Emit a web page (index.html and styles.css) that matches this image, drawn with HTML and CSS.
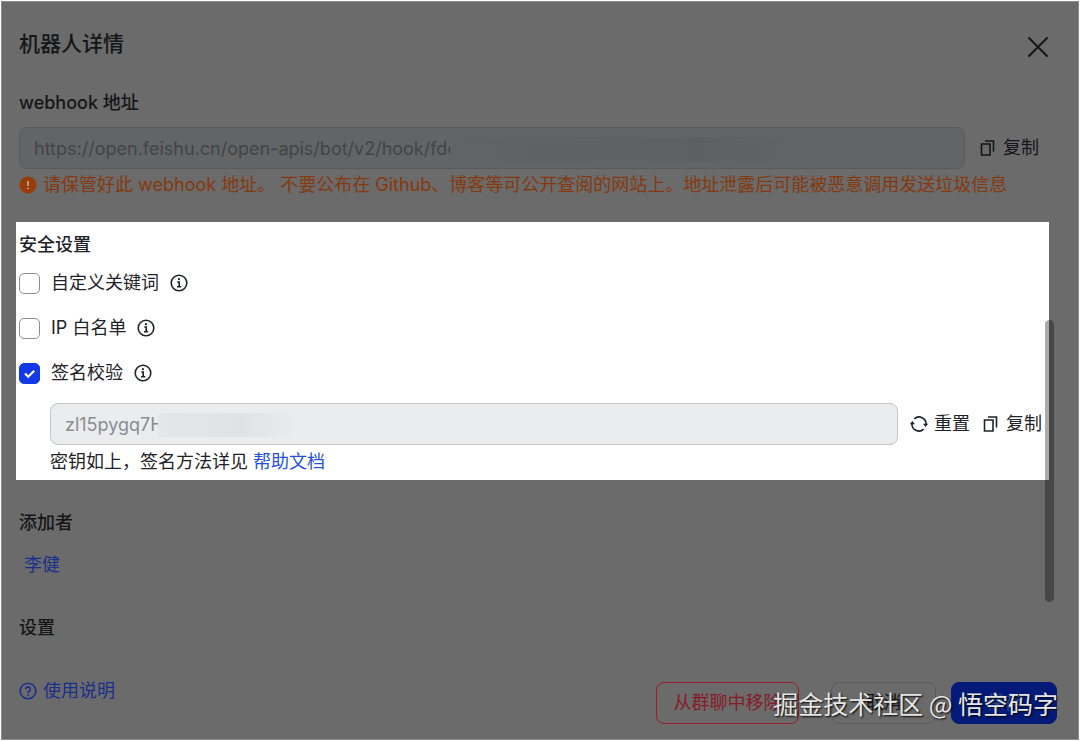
FILE: index.html
```html
<!DOCTYPE html>
<html lang="zh-CN">
<head>
<meta charset="utf-8">
<title>机器人详情</title>
<link rel="stylesheet" href="styles.css">
</head>
<body>
<svg class="sprite" aria-hidden="true">
  <symbol id="copy" viewBox="0 0 18 18"><path d="M2.500 5h8.500v11H2.500zM6 2h8.500v10.500" /></symbol>
  <symbol id="info" viewBox="0 0 18 18"><circle cx="9" cy="9" r="7.800"/><path d="M7.300 8h1.900v4.600M7 12.800h4.200"/><circle class="dot" cx="8.900" cy="5.200" r="1.100"/></symbol>
  <symbol id="reset" viewBox="0 0 18 18"><path d="M4.300 3.800A7 7 0 0 1 16 9.600M13.700 14.200A7 7 0 0 1 2 8.400"/><path class="dot" d="M13 8.800h5.200l-2.600 3.200zM5 9.200H-.2l2.600-3.200z"/></symbol>
</svg>
<main class="dialog">
  <header class="head">
    <h1 class="title">机器人详情</h1>
    <button class="close" type="button" aria-label="关闭">
      <svg viewBox="0 0 22 22"><path d="M2 2l18 18M20 2L2 20"/></svg>
    </button>
  </header>

  <section class="webhook">
    <label class="heading" for="hook">webhook 地址</label>
    <div class="field-row">
      <div class="field">
        <input class="input" id="hook" type="text" value="https://open.feishu.cn/open-apis/bot/v2/hook/fdc" readonly>
        <span class="smudge smudge-hook"></span>
      </div>
      <button class="action" type="button"><svg class="icon"><use href="#copy"/></svg>复制</button>
    </div>
    <p class="warning">
      <svg class="icon" viewBox="0 0 18 18"><circle class="warn-disc" cx="9" cy="9" r="8.600"/><path class="warn-mark" d="M9 5v5M9 11.700v1.300"/></svg>
      <span>请保管好此 webhook 地址。 不要公布在 Github、博客等可公开查阅的网站上。地址泄露后可能被恶意调用发送垃圾信息</span>
    </p>
  </section>

  <section class="security">
    <h2 class="heading">安全设置</h2>
    <div class="option"><input class="check" type="checkbox" id="kw"><label for="kw">自定义关键词</label><svg class="icon"><use href="#info"/></svg></div>
    <div class="option"><input class="check" type="checkbox" id="ip"><label for="ip">IP 白名单</label><svg class="icon"><use href="#info"/></svg></div>
    <div class="option"><input class="check" type="checkbox" id="sign" checked><label for="sign">签名校验</label><svg class="icon"><use href="#info"/></svg></div>
    <div class="secret">
      <div class="field-row">
        <div class="field">
          <input class="input" type="text" aria-label="签名密钥" value="zl15pygq7H" readonly>
          <span class="smudge smudge-key"></span>
        </div>
        <button class="action" type="button"><svg class="icon"><use href="#reset"/></svg>重置</button>
        <button class="action" type="button"><svg class="icon"><use href="#copy"/></svg>复制</button>
      </div>
      <p class="hint">密钥如上，签名方法详见 <a class="doc" href="#">帮助文档</a></p>
    </div>
  </section>

  <section class="owner">
    <h2 class="heading">添加者</h2>
    <a class="person" href="#">李健</a>
  </section>

  <h2 class="heading">设置</h2>

  <footer class="foot">
    <a class="manual" href="#">
      <svg class="icon" viewBox="0 0 18 18"><circle cx="9" cy="9" r="7.800"/><path d="M6.700 7.200a2.300 2.300 0 1 1 3.500 2c-.8.500-1.200.8-1.200 1.700"/><circle class="dot" cx="9" cy="13" r=".9"/></svg>使用说明
    </a>
    <button class="btn btn-danger" type="button">从群聊中移除</button>
    <button class="btn btn-plain" type="button">取消</button>
    <button class="btn btn-primary" type="button">保存</button>
  </footer>
  <div class="scroll-thumb"></div>
  <div class="watermark">掘金技术社区 @ 悟空码字</div>
</main>
</body>
</html>
```
FILE: styles.css
```css
* { box-sizing: border-box; }
body {
  margin: 0;
  background: #fff;
  color: #151618;
  font: 18px/26px Inter, "Noto Sans CJK SC", sans-serif;
}
h1, h2, p { margin: 0; }
a { text-decoration: none; color: #1a2f8c; }
button, input { font: inherit; color: inherit; }
button { background: none; border: 0; padding: 0; }
.sprite { position: absolute; width: 0; height: 0; }
svg { fill: none; stroke: currentColor; stroke-width: 1.600; overflow: visible; }
.dot { fill: currentColor; stroke: none; }
.icon { width: 18px; height: 18px; flex: none; }

.dialog {
  position: relative;
  display: flex;
  flex-direction: column;
  min-height: calc(100vh - 2px);
  margin: 1px;
  padding: 27px 21px 11px 17px;
  background: #6b6b6b;
  border: 1px solid #8c8c8c;
}
.head { display: flex; justify-content: space-between; align-items: center; height: 30px; }
.title { font-size: 21px; line-height: 30px; font-weight: 500; }
.close { display: flex; margin: 6px 8px 0 0; }
.close svg { width: 22px; height: 22px; stroke-width: 2; stroke-linecap: round; }
.heading { display: block; font-size: 18px; line-height: 26px; font-weight: 500; }

.webhook { margin-top: 31px; }
.field-row { display: flex; align-items: center; gap: 14px; }
.webhook .field-row { margin-top: 11px; padding-right: 18px; }
.field { position: relative; flex: 1; min-width: 0; }
.input {
  display: block;
  width: 100%;
  height: 42px;
  padding: 0 14px;
  border: 1px solid #585a5c;
  border-radius: 8px;
  background: #636465;
  color: #414449;
  outline: 0;
}
.action { display: flex; align-items: center; gap: 6px; white-space: nowrap; }
.smudge { position: absolute; height: 24px; top: 10px; }
.smudge-hook { left: 431px; width: 360px; background: linear-gradient(90deg, #626364, #5e5f61 70%, #636465); }
.warning { display: flex; align-items: center; gap: 6px; margin-top: 3px; color: #85390f; white-space: nowrap; }
.warn-disc { fill: #9a3c0a; stroke: none; }
.warn-mark { stroke: #bbb; stroke-width: 1.500; }

.security {
  margin: 24px 8px 0 -3px;
  padding: 10px 7px 5px 3px;
  background: #fff;
  color: #1f2329;
}
.option { display: flex; align-items: center; height: 26px; margin-bottom: 19px; }
.option label { margin: 0 11px; }
.security .heading { margin-bottom: 12px; }
.check {
  appearance: none;
  width: 21px;
  height: 21px;
  margin: 0;
  border: 1px solid #8a8d92;
  border-radius: 5px;
  background: #fff;
}
.check:checked {
  border-color: #1239e6;
  background: #1239e6 url("data:image/svg+xml,%3Csvg xmlns='http://www.w3.org/2000/svg' viewBox='0 0 19 19'%3E%3Cpath d='M5 9.500l3.200 3.200L14.200 6.700' fill='none' stroke='white' stroke-width='2.200'/%3E%3C/svg%3E") center / 19px;
}
.secret { padding-left: 31px; margin-top: -2px; }
.secret .field-row { gap: 12px; }
.secret .input { background: #ebecee; border-color: #c3c6ca; color: #898c92; }
.smudge-key { left: 108px; width: 140px; background: linear-gradient(90deg, #e4e6e8, #e0e2e4 60%, #ebecee); }
.hint { margin-top: 4px; }
.doc { color: #2450dc; }

.owner { margin: 30px 0 37px; }
.person { display: block; margin-top: 16px; padding-left: 5px; }
.foot { display: flex; align-items: center; margin-top: auto; }
.manual { display: flex; align-items: center; gap: 6px; margin: 0 auto 24px 0; }
.btn { height: 42px; padding: 0 14px; border: 1px solid; border-radius: 8px; }
.btn-danger { width: 143px; border-color: #97202a; color: #851c25; }
.btn-plain { width: 105px; margin-left: 32px; border-color: #595a5c; }
.btn-primary { width: 106px; margin-left: 15px; border-color: #041a78; background: #041a78; color: #304389; }
.scroll-thumb {
  position: absolute;
  top: 318px;
  right: 24px;
  width: 9px;
  height: 282px;
  border-radius: 5px;
  background: rgba(0, 0, 0, .33);
}
.watermark {
  position: absolute;
  right: 20px;
  bottom: 18px;
  font: 25px/36px "Noto Sans CJK SC", sans-serif;
  color: #e6e6e6;
  text-shadow: 1px 1px 2px #000;
  white-space: nowrap;
}
```
